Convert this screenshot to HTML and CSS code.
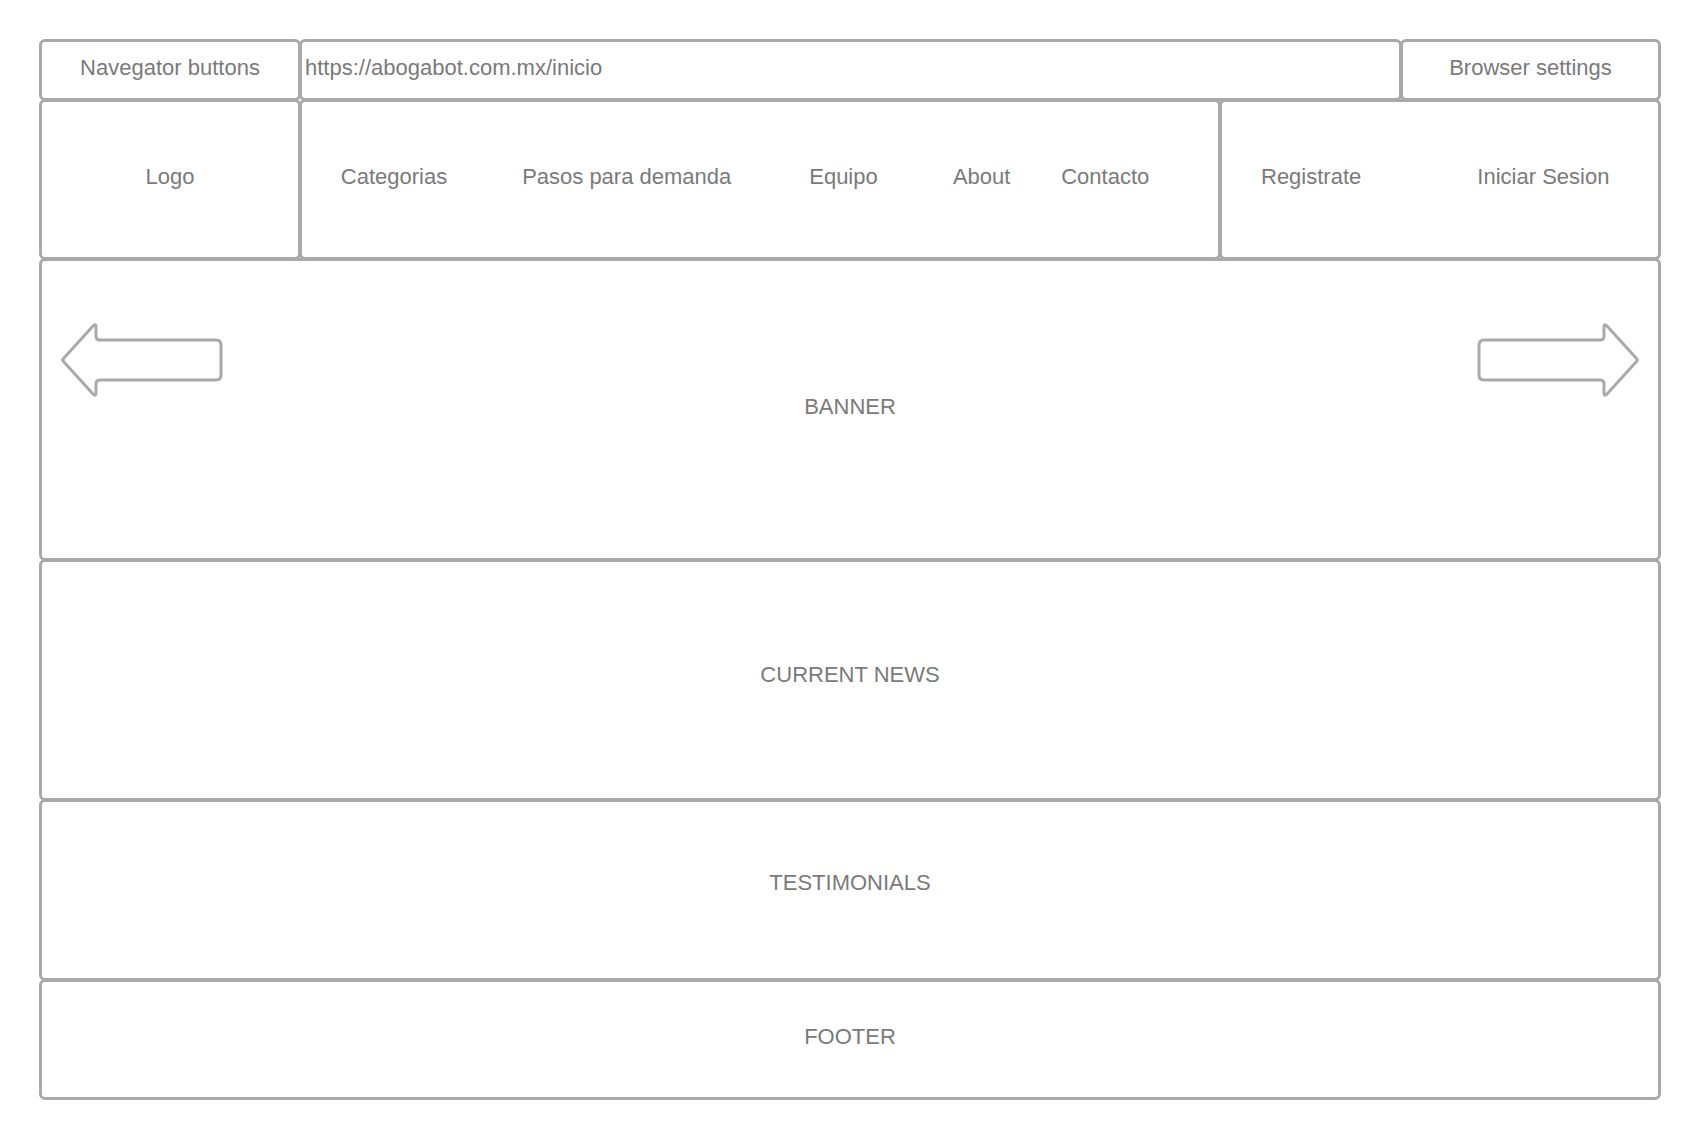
FILE: index.html
```html
<!DOCTYPE html>
<html lang="es">
<head>
<meta charset="utf-8">
<title>Abogabot wireframe</title>
<link rel="stylesheet" href="styles.css">
</head>
<body>
<div class="frame">
  <div class="row row-top">
    <div class="box nav-buttons">Navegator buttons</div>
    <div class="box url">https://abogabot.com.mx/inicio</div>
    <div class="box settings">Browser settings</div>
  </div>
  <div class="row row-header">
    <div class="box logo">Logo</div>
    <nav class="box menu">
      <span>Categorias</span>
      <span>Pasos para demanda</span>
      <span>Equipo</span>
      <span>About</span>
      <span>Contacto</span>
    </nav>
    <div class="box auth">
      <span>Registrate</span>
      <span>Iniciar Sesion</span>
    </div>
  </div>
  <section class="box section banner">
    <svg class="arrow arrow-left" width="164" height="80" viewBox="0 0 164 80">
      <path d="M3.5 37.5 L33 5 Q36 2 36 6 L36 15 Q36 19 40 19 L156 19 Q161 19 161 24 L161 54 Q161 59 156 59 L40 59 Q36 59 36 63 L36 72 Q36 76 33 73 L3.5 40.5 Q2 39 3.5 37.5 Z"/>
    </svg>
    BANNER
    <svg class="arrow arrow-right" width="164" height="80" viewBox="0 0 164 80">
      <path d="M3.5 37.5 L33 5 Q36 2 36 6 L36 15 Q36 19 40 19 L156 19 Q161 19 161 24 L161 54 Q161 59 156 59 L40 59 Q36 59 36 63 L36 72 Q36 76 33 73 L3.5 40.5 Q2 39 3.5 37.5 Z"/>
    </svg>
  </section>
  <section class="box section news">CURRENT NEWS</section>
  <section class="box section testimonials">TESTIMONIALS</section>
  <section class="box section footer">FOOTER</section>
</div>
</body>
</html>
```
FILE: styles.css
```css
html, body {
  margin: 0;
  padding: 0;
  background: #ffffff;
}

body {
  font-family: "Liberation Sans", Arial, sans-serif;
  font-size: 22px;
  color: #7a7a7a;
}

.frame {
  padding: 39px 0 0 39px;
  width: 1622px;
}

.row {
  display: flex;
}

.row + .row,
.section {
  margin-top: -2px;
}

.box {
  box-sizing: border-box;
  border: 3px solid #a9a9a9;
  border-radius: 6px;
  display: flex;
  align-items: center;
  justify-content: center;
  padding-bottom: 6px;
  white-space: nowrap;
}

.row .box + .box {
  margin-left: -2px;
}

.row-top {
  height: 62px;
}

.row-top .box {
  padding-bottom: 4px;
}

.nav-buttons {
  width: 262px;
}

.url {
  flex: 1;
  justify-content: flex-start;
  padding-left: 3px;
}

.settings {
  width: 261px;
}

.row-header {
  height: 161px;
}

.logo {
  width: 262px;
}

.menu {
  flex: 1;
  display: grid;
  grid-template-columns: 184px 281.4px 152.2px 124.2px 123px;
  justify-content: start;
  justify-items: center;
  align-content: center;
}

.auth {
  width: 442px;
  justify-content: space-between;
  padding-left: 39px;
  padding-right: 48.6px;
}

.section {
  width: 1622px;
}

.banner {
  position: relative;
  height: 303px;
}

.news {
  height: 242px;
  padding-bottom: 10px;
}

.testimonials {
  height: 182px;
  padding-bottom: 14px;
}

.footer {
  height: 121px;
}

.arrow {
  position: absolute;
  top: 60px;
}

.arrow path {
  fill: none;
  stroke: #a9a9a9;
  stroke-width: 3;
  stroke-linejoin: round;
}

.arrow-left {
  left: 18px;
}

.arrow-right {
  right: 18px;
  transform: scaleX(-1);
}
```
